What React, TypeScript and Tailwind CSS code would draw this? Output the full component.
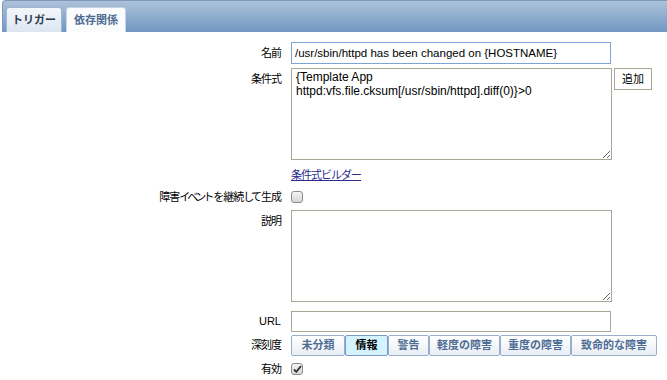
import React from "react";

function Check({ checked }: { checked?: boolean }) {
  return (
    <div className="w-[12px] h-[12px] rounded-[3px] border border-[#8c8c8c] bg-gradient-to-b from-[#f4f4f4] to-[#d6d6d6] flex items-center justify-center">
      {checked && (
        <svg width="9" height="8" viewBox="0 0 9 8">
          <path d="M1 4.5 L3.3 6.8 L8 1.2" stroke="#333" strokeWidth="1.8" fill="none" />
        </svg>
      )}
    </div>
  );
}

export default function App() {
  const sev = [
    { t: "未分類", w: "w-[54px]" },
    { t: "情報", w: "w-[43px]", active: true },
    { t: "警告", w: "w-[41px]" },
    { t: "軽度の障害", w: "w-[71px]" },
    { t: "重度の障害", w: "w-[71px]" },
    { t: "致命的な障害", w: "w-[86px]" },
  ];
  const label = "w-[281px] shrink-0 text-right mr-[10px] text-[11px] tracking-[-1px] text-black";
  return (
    <div className="w-[667px] h-[380px] bg-white overflow-hidden font-['Liberation_Sans','Noto_Sans_CJK_JP',sans-serif] text-[12px]">
      <div className="h-[32px] ml-[2px] rounded-tl-[4px] border-t border-l border-[#7f98ba] bg-gradient-to-b from-[#adc2da] to-[#7097c2] flex items-end pl-[3px] gap-[4px]">
        <div className="h-[25px] w-[56px] rounded-t-[3px] border border-b-0 border-[#9fb4cf] bg-gradient-to-b from-[#f3f7fb] to-[#dce6f1] flex items-center justify-center text-[11px] font-bold text-[#2d3b4e]">
          トリガー
        </div>
        <div className="h-[25px] w-[60px] rounded-t-[3px] border border-b-0 border-[#c5d3e4] bg-[#fbfcfe] flex items-center justify-center text-[11px] font-bold text-[#4e6b92]">
          依存関係
        </div>
      </div>

      <div className="flex flex-col">
        <div className="flex items-center mt-[10px] h-[22px]">
          <div className={label}>名前</div>
          <input
            className="w-[320px] h-[22px] border border-[#7ea3d8] px-[3px] text-[11.5px] outline-none text-black"
            defaultValue="/usr/sbin/httpd has been changed on {HOSTNAME}"
          />
        </div>

        <div className="flex items-start mt-[4px]">
          <div className={label + " pt-[3px]"}>条件式</div>
          <textarea
            className="w-[321px] h-[92px] border border-[#aaa799] px-[4px] py-[1px] text-[12px] leading-[14px] outline-none text-black"
            defaultValue={"{Template App\nhttpd:vfs.file.cksum[/usr/sbin/httpd].diff(0)}>0"}
          />
          <button className="ml-[2px] w-[38px] h-[22px] border border-[#aaa799] bg-white text-[11px] text-black">
            追加
          </button>
        </div>

        <div className="flex items-center mt-[7px] h-[16px]">
          <div className={label}></div>
          <a className="text-[11px] tracking-[-1px] text-[#2b2b8c] underline cursor-pointer">条件式ビルダー</a>
        </div>

        <div className="flex items-center mt-[7px] h-[14px]">
          <div className={label}>
            <span>障害</span>
            <span className="tracking-[-3px] mr-[2px]">イベント</span>
            <span className="tracking-[-2px] mr-[1px]">を</span>
            <span>継続</span>
            <span className="tracking-[-3px] mr-[2px]">して</span>
            <span>生成</span>
          </div>
          <Check />
        </div>

        <div className="flex items-start mt-[6px]">
          <div className={label + " pt-[3px]"}>説明</div>
          <textarea className="w-[321px] h-[92px] border border-[#aaa799] outline-none" />
        </div>

        <div className="flex items-center mt-[9px] h-[21px]">
          <div className={label + " tracking-normal text-[#1f2f66]"}>URL</div>
          <input className="w-[320px] h-[21px] border border-[#aaa799] outline-none" />
        </div>

        <div className="flex items-center mt-[3px] h-[21px]">
          <div className={label}>深刻度</div>
          <div className="flex">
            {sev.map((s) => (
              <div
                key={s.t}
                className={
                  s.w +
                  " h-[21px] flex items-center justify-center rounded-[2px] border text-[11px] font-bold " +
                  (s.active
                    ? "border-[#7c9bc4] bg-[#d5f3ff] text-black"
                    : "border-[#98afcc] bg-gradient-to-b from-[#ffffff] to-[#e9eef5] text-[#4f6d94]")
                }
              >
                {s.t}
              </div>
            ))}
          </div>
        </div>

        <div className="flex items-center mt-[6px] h-[14px]">
          <div className={label}>有効</div>
          <Check checked />
        </div>
      </div>
    </div>
  );
}
